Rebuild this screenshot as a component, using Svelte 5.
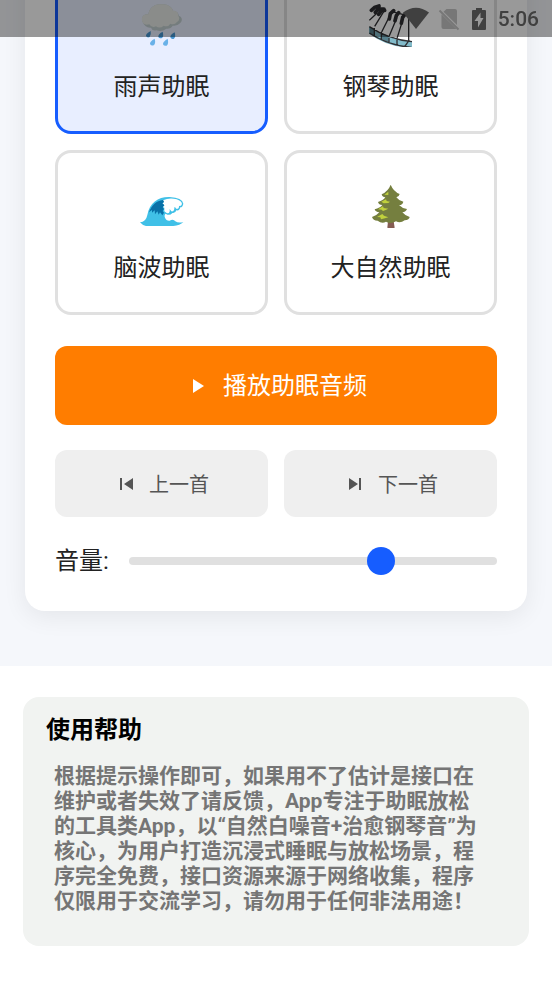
<script lang="ts">
  type Sound = { id: string; name: string };

  const sounds: Sound[] = [
    { id: 'rain', name: '雨声助眠' },
    { id: 'piano', name: '钢琴助眠' },
    { id: 'wave', name: '脑波助眠' },
    { id: 'nature', name: '大自然助眠' },
  ];

  let current = $state('rain');
  let volume = $state(70);

  function step(offset: number) {
    const index = sounds.findIndex((s) => s.id === current);
    current = sounds[(index + offset + sounds.length) % sounds.length].id;
  }
</script>

<div class="screen">
  <header class="status-bar">
    <svg class="wifi" viewBox="0 0 28 24" aria-hidden="true">
      <path d="M1 5.500Q14-4 27 5.500L14 22Z" />
    </svg>
    <svg class="sim" viewBox="0 0 24 24" aria-hidden="true">
      <path d="M8.500 2H17a2 2 0 0 1 2 2V18L5.500 4.800ZM3.500 7.200 18.500 22H5.500a2 2 0 0 1-2-2Z" />
      <path class="slash" d="M1.500 3.500 20.500 22.500" />
    </svg>
    <svg class="battery" viewBox="0 0 14 24" aria-hidden="true">
      <path
        fill-rule="evenodd"
        d="M4 1h6v2h3q1 0 1 1v18q0 1-1 1H1q-1 0-1-1V4q0-1 1-1h3ZM8.500 5.500 2.500 14H6v6.500L11.500 11H8.500Z"
      />
    </svg>
    <span class="time">5:06</span>
  </header>

  <main class="player">
    <div class="card">
      <div class="sounds">
        {#each sounds as sound (sound.id)}
          <button
            class="sound"
            class:active={current === sound.id}
            aria-pressed={current === sound.id}
            onclick={() => (current = sound.id)}
          >
            {#if sound.id === 'rain'}
              <svg class="emoji" viewBox="15 9 132 132" aria-hidden="true">
                <path
                  fill="#c2cfd0"
                  d="M22 64C18 48 29 41 40 43C43 24 58 11 78 13C96 10 111 20 115 33C125 32 131 40 131 47C142 50 144 62 135 70Q127 79 113 77Q108 87 94 86Q80 97 64 91Q52 94 48 83Q30 85 22 64Z"
                />
                <path
                  fill="#e6eae6"
                  d="M24 69C15 53 25 40 40 43C43 24 58 11 78 13C96 10 111 20 114 32C125 31 131 39 129 47C136 53 132 63 126 66Q118 76 106 71Q99 83 86 77Q75 87 63 79Q50 85 43 73Q31 77 24 69Z"
                />
                <g fill="#4796d2">
                  <path d="M47 93Q49 104 44 111Q37 115 33 108Q31 102 47 93Z" />
                  <path d="M83 95Q87 109 81 114Q73 117 70 111Q68 103 83 95Z" />
                  <path d="M119 97Q123 111 117 116Q109 119 106 112Q105 104 119 97Z" />
                </g>
                <g fill="#69b1e8">
                  <path d="M59 116Q63 130 56 136Q48 138 45 132Q44 124 59 116Z" />
                  <path d="M98 116Q102 131 95 137Q87 139 84 133Q83 125 98 116Z" />
                </g>
              </svg>
            {:else if sound.id === 'piano'}
              <svg class="emoji" viewBox="25 9 132 132" aria-hidden="true">
                <path fill="#82bbca" d="M25 80Q82 120 154 124V142Q85 144 25 101Z" />
                <path fill="#567f8c" d="M27 81 40 88V105L27 98ZM62 99 84 109V127L62 116Z" />
                <path
                  fill="none"
                  stroke="#303033"
                  stroke-width="4"
                  d="M26 80Q82 118 154 125M26 99Q83 137 152 142M41 84V108M62 96V119M85 107V130M109 114V136M143 124 132 140M26 61 50 38M42 79 69 35M63 96 87 48M86 107 108 55M109 115 124 67M144 124V48M46 26 70 31M91 34 149 49"
                />
                <path
                  fill="none"
                  stroke="#303033"
                  stroke-width="11"
                  stroke-linecap="round"
                  d="M32 31 42 22 55 18M44 37 53 27 70 27M54 43 63 32 72 31M86 57 89 41 99 32M103 62 107 47 114 38M122 70 126 52 133 43"
                />
              </svg>
            {:else if sound.id === 'wave'}
              <svg class="emoji" viewBox="30 12 132 132" aria-hidden="true">
                <path
                  fill="#40c0e7"
                  d="M30 127Q48 126 52 105C59 67 85 50 119 51Q157 53 160 71Q158 82 151 82Q149 93 139 91Q136 101 127 99Q119 109 107 101C99 106 107 124 119 122Q130 116 136 124Q145 130 160 126Q150 137 130 138H48Q37 136 30 127Z"
                />
                <path
                  fill="#fff"
                  d="M99 61Q118 52 140 58Q155 63 156 72Q153 80 147 77Q148 88 138 86Q137 80 133 82Q134 96 124 94L119 87Q121 102 110 99L103 94V83L98 81L103 76L97 70L102 66Z"
                />
                <path
                  fill="#0871a8"
                  d="M57 97C65 76 79 62 99 60L102 66L97 70L103 76L98 82L102 87L98 93L102 98L97 106L90 97L86 104L82 94L75 103L74 91L66 98L66 90Z"
                />
              </svg>
            {:else}
              <svg class="emoji" viewBox="40 27 132 132" aria-hidden="true">
                <path fill="#855c52" d="M97 139H114L117 158Q106 161 95 158Z" />
                <path
                  fill="#757f3f"
                  d="M105 29Q113 49 132 57Q130 66 122 67Q129 77 143 80Q141 90 130 90Q138 99 154 102Q151 111 140 112Q147 121 162 126Q161 135 147 136Q134 146 121 139Q105 148 91 140Q79 148 66 137Q52 137 49 126Q63 122 71 112Q59 111 57 103Q73 99 80 90Q69 90 67 81Q83 76 89 67Q79 66 78 58Q98 48 105 29Z"
                />
                <g fill="#c0d13d">
                  <path d="M86 59 98 50 98 60Z" />
                  <path d="M77 80 91 73 93 78 103 80 98 84 84 85Z" />
                  <path d="M67 103 82 94 84 99 98 101 90 105 82 108 78 104Z" />
                  <path d="M64 126 80 117 85 122 98 127 88 130 76 133 74 127Z" />
                </g>
              </svg>
            {/if}
            <span>{sound.name}</span>
          </button>
        {/each}
      </div>

      <button class="play">
        <svg class="icon" viewBox="0 0 24 24" aria-hidden="true">
          <path d="M8 5v14l11-7z" />
        </svg>
        <span>播放助眠音频</span>
      </button>

      <div class="controls">
        <button class="skip" onclick={() => step(-1)}>
          <svg class="icon" viewBox="0 0 24 24" aria-hidden="true">
            <path d="M6 6h2v12H6zM10 12l9 6V6z" />
          </svg>
          <span>上一首</span>
        </button>
        <button class="skip" onclick={() => step(1)}>
          <svg class="icon" viewBox="0 0 24 24" aria-hidden="true">
            <path d="M6 18l9-6-9-6zM16 6v12h2V6z" />
          </svg>
          <span>下一首</span>
        </button>
      </div>

      <div class="volume">
        <label for="volume">音量:</label>
        <input id="volume" type="range" min="0" max="100" bind:value={volume} />
      </div>
    </div>
  </main>

  <section class="help">
    <div class="help-card">
      <h2>使用帮助</h2>
      <p>
        根据提示操作即可，如果用不了估计是接口在维护或者失效了请反馈，App专注于助眠放松的工具类App，以“自然白噪音+治愈钢琴音”为核心，为用户打造沉浸式睡眠与放松场景，程序完全免费，接口资源来源于网络收集，程序仅限用于交流学习，请勿用于任何非法用途！
      </p>
    </div>
  </section>
</div>

<style>
  :global(body) {
    background: #fff;
  }

  /* the page rests at the end of its scroll, under the status bar */
  .screen {
    display: flex;
    flex-direction: column;
    justify-content: flex-end;
    height: 100vh;
    overflow: hidden;
    font-family: Roboto, 'Noto Sans CJK SC', sans-serif;
    color: #222;
  }

  .player,
  .help {
    flex-shrink: 0;
  }

  .status-bar {
    position: fixed;
    top: 0;
    left: 0;
    right: 0;
    z-index: 10;
    display: flex;
    align-items: center;
    justify-content: flex-end;
    box-sizing: border-box;
    height: 37px;
    padding-right: 13px;
    background: rgba(0, 0, 0, 0.4);
    color: #404040;
    fill: #404040;
  }

  .wifi {
    width: 28px;
    height: 24px;
    margin-right: 8px;
  }

  .sim {
    width: 24px;
    height: 24px;
    margin-right: 10px;
    fill: #777;
  }

  .slash {
    stroke: #777;
    stroke-width: 2;
  }

  .battery {
    width: 14px;
    height: 24px;
    margin-right: 12px;
  }

  .time {
    font-size: 21px;
    font-weight: 500;
    line-height: 24px;
  }

  .player {
    padding: 0 25px 55px;
    background: #f5f7fb;
  }

  .card {
    padding: 31px 30px;
    background: #fff;
    border-radius: 20px;
    box-shadow: 0 6px 24px rgba(0, 0, 0, 0.07);
  }

  button {
    display: flex;
    align-items: center;
    justify-content: center;
    margin: 0;
    border: 0;
    font-family: inherit;
    cursor: pointer;
  }

  .sounds {
    display: grid;
    grid-template-columns: 1fr 1fr;
    gap: 16px;
    margin-bottom: 31px;
  }

  .sound {
    flex-direction: column;
    gap: 22px;
    padding: 31px 8px 26px;
    background: #fff;
    border: 3px solid #e0e0e0;
    border-radius: 16px;
    color: #222;
    font-size: 24px;
    line-height: 36px;
  }

  .sound.active {
    background: #e8eeff;
    border-color: #165dff;
  }

  .emoji {
    width: 44px;
    height: 44px;
  }

  .icon {
    width: 24px;
    height: 24px;
    fill: currentColor;
  }

  .play {
    gap: 14px;
    width: 100%;
    height: 79px;
    background: #ff7d00;
    border-radius: 12px;
    color: #fff;
    font-size: 24px;
    line-height: 36px;
  }

  .controls {
    display: grid;
    grid-template-columns: 1fr 1fr;
    gap: 16px;
    margin: 25px 0;
  }

  .skip {
    gap: 11px;
    height: 67px;
    background: #efefef;
    border-radius: 12px;
    color: #555;
    font-size: 20px;
  }

  .volume {
    display: flex;
    align-items: center;
    gap: 20px;
    font-size: 24px;
    line-height: 38px;
  }

  .volume input {
    flex: 1;
    min-width: 0;
    height: 8px;
    margin: 0;
    appearance: none;
    background: #e0e0e0;
    border-radius: 4px;
  }

  .volume input::-webkit-slider-thumb {
    appearance: none;
    width: 28px;
    height: 28px;
    background: #165dff;
    border-radius: 50%;
  }

  .help {
    padding: 31px 23px 37px;
  }

  .help-card {
    padding: 17px 46px 32px 23px;
    background: #f1f3f1;
    border-radius: 16px;
  }

  .help h2 {
    margin: 0 0 18px;
    color: #000;
    font-size: 24px;
    font-weight: bold;
    line-height: 32px;
  }

  .help p {
    margin: 0 0 0 8px;
    color: #757575;
    font-size: 21px;
    font-weight: bold;
    line-height: 25px;
  }
</style>
